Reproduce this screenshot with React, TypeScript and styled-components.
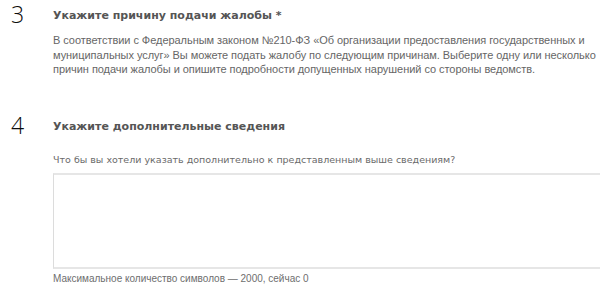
import React from 'react';
import styled, {createGlobalStyle} from "styled-components";

const GlobalStyle = createGlobalStyle`
    html, body {
        margin: 0;
        padding: 0;
        background: #ffffff;
        overflow: hidden;
    }
    body {
        font-family: "Liberation Sans", Arial, sans-serif;
        width: 600px;
    }
`

export default function App() {
    return (
        <>
            <GlobalStyle/>
            <Page>
                <Step>
                    <StepNumber>3</StepNumber>
                    <StepBody>
                        <StepTitle>Укажите причину подачи жалобы *</StepTitle>
                        <StepText>
                            В соответствии с Федеральным законом №210-ФЗ «Об организации предоставления государственных и
                            муниципальных услуг» Вы можете подать жалобу по следующим причинам. Выберите одну или несколько
                            причин подачи жалобы и опишите подробности допущенных нарушений со стороны ведомств.
                        </StepText>
                    </StepBody>
                </Step>

                <Step $gap={35}>
                    <StepNumber>4</StepNumber>
                    <StepBody>
                        <StepTitle>Укажите дополнительные сведения</StepTitle>
                        <FieldLabel>
                            Что бы вы хотели указать дополнительно к представленным выше сведениям?
                        </FieldLabel>
                        <TextArea/>
                        <Hint>Максимальное количество символов — 2000, сейчас 0</Hint>
                    </StepBody>
                </Step>
            </Page>
        </>
    );
}

const Page = styled.main`
    display: flex;
    flex-direction: column;
    padding-top: 1px;
`
const Step = styled.section<{ $gap?: number }>`
    display: grid;
    grid-template-columns: 53px 1fr;
    margin-top: ${p => p.$gap ?? 0}px;
`
const StepNumber = styled.div`
    font-family: "Open Sans", sans-serif;
    font-weight: 300;
    font-size: 23px;
    line-height: 28px;
    color: #0c0c0c;
    padding-left: 11px;
    margin-top: -1px;
`
const StepBody = styled.div`
    display: flex;
    flex-direction: column;
    padding-top: 8px;
`
const StepTitle = styled.h2`
    margin: 0;
    font-family: "DejaVu Sans", Verdana, sans-serif;
    font-weight: bold;
    font-size: 11px;
    line-height: 14px;
    color: #555555;
`
const StepText = styled.p`
    margin: 10px 0 0;
    width: 548px;
    font-size: 11px;
    line-height: 14.5px;
    letter-spacing: -0.05px;
    color: #666666;
`
const FieldLabel = styled.label`
    margin-top: 19px;
    font-family: "DejaVu Sans", Verdana, sans-serif;
    font-size: 9.5px;
    line-height: 14px;
    color: #6a6a6a;
`
const TextArea = styled.textarea`
    margin-top: 6px;
    width: 580px;
    height: 96px;
    box-sizing: border-box;
    border: 1px solid #dcdcdc;
    border-width: 2px 1px 2px 1px;
    border-top-color: #e6e6e6;
    border-bottom-color: #e6e6e6;
    resize: none;
    outline: none;
`
const Hint = styled.span`
    margin-top: 3px;
    font-size: 10px;
    line-height: 14px;
    color: #6e6e6e;
`
